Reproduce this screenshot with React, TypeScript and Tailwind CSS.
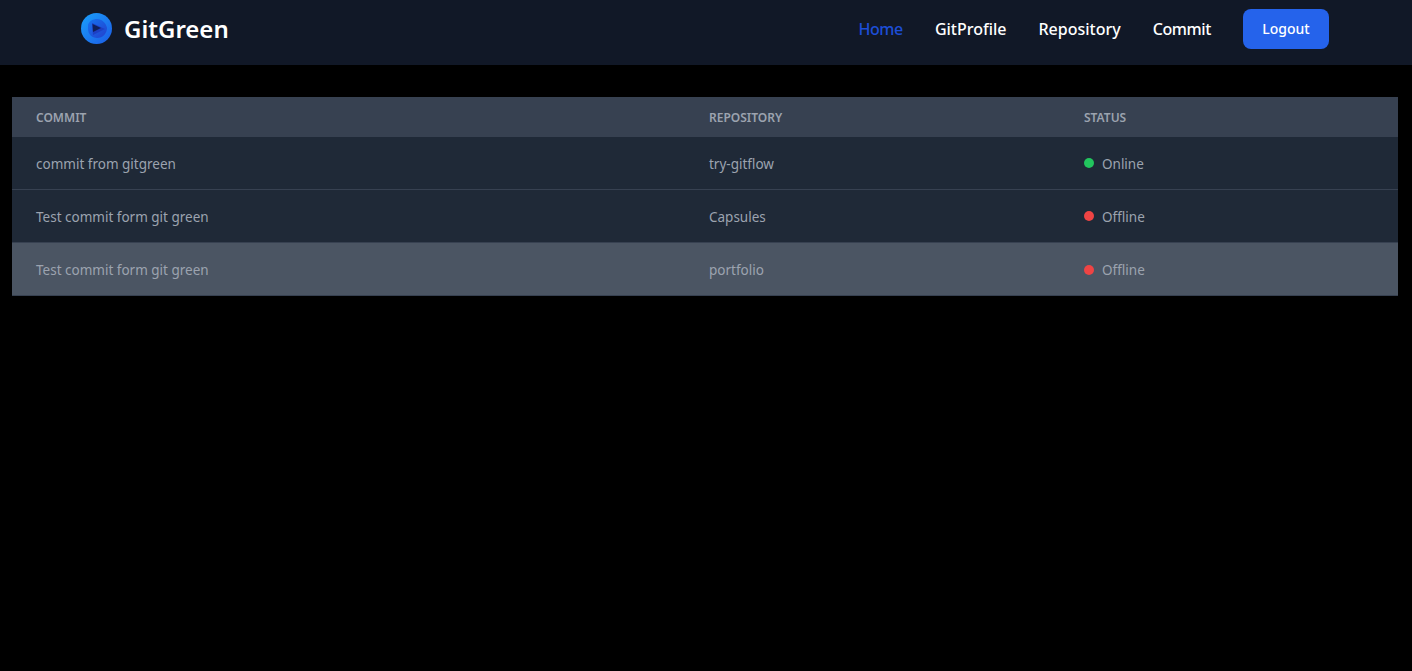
import React from 'react';

const rows = [
    { commit: 'commit from gitgreen', repo: 'try-gitflow', status: 'Online' },
    { commit: 'Test commit form git green', repo: 'Capsules', status: 'Offline' },
    { commit: 'Test commit form git green', repo: 'portfolio', status: 'Offline' },
];

const Logo = () => (
    <svg width="31" height="31" viewBox="0 0 31 31" className="mr-3 -mt-px">
        <defs>
            <linearGradient id="logoRing" x1="0" y1="0" x2="1" y2="1">
                <stop offset="0" stopColor="#1aa0fb" />
                <stop offset="1" stopColor="#1c5be6" />
            </linearGradient>
            <linearGradient id="logoBand" x1="0" y1="0" x2="1" y2="1">
                <stop offset="0" stopColor="#1573f0" />
                <stop offset="1" stopColor="#2340cc" />
            </linearGradient>
        </defs>
        <circle cx="15.5" cy="15.5" r="15.5" fill="url(#logoRing)" />
        <path d="M7 12 C8 8 12 6 16 6 C21 6 25 10 26 15 C26 20 22 25 16 25 C11 25 7 21 7 16 Z" fill="url(#logoBand)" />
        <path d="M11 10 L24 16 L12 22 Z" fill="#1d3fc4" />
        <path d="M11.5 11 L20 15 L12 19 Z" fill="#0f1f5c" />
    </svg>
);

const NavLink = ({ label, className }: { label: string; className: string }) => (
    <a href="#" className={className}>
        {label}
    </a>
);

export default function App() {
    return (
        <div className="min-h-[671px] bg-black font-['Noto_Sans',sans-serif]">
            <nav className="h-[65px] bg-[#111827] flex items-center justify-between pl-[81px] pr-[83px] pb-[7px]">
                <div className="flex items-center">
                    <Logo />
                    <span className="text-2xl font-semibold text-white">GitGreen</span>
                </div>
                <div className="flex items-center gap-8">
                    <NavLink label="Home" className="font-medium tracking-[-0.4px] text-[#1d4ed8]" />
                    <NavLink label="GitProfile" className="font-medium text-white" />
                    <NavLink label="Repository" className="font-medium text-white" />
                    <NavLink label="Commit" className="font-medium tracking-[-0.4px] text-white" />
                    <button className="h-10 w-[86px] rounded-lg bg-[#2563eb] text-sm font-medium text-white">Logout</button>
                </div>
            </nav>

            <div className="mt-8 ml-3 mr-3.5">
                <table className="w-full table-fixed text-left text-[13.5px] text-[#9ca3af]">
                    <thead className="bg-[#374151] text-xs uppercase">
                        <tr className="h-10">
                            <th className="w-[673px] px-6 pt-px font-semibold">Commit</th>
                            <th className="w-[375px] px-6 pt-px font-semibold">Repository</th>
                            <th className="px-6 pt-px font-semibold">Status</th>
                        </tr>
                    </thead>
                    <tbody>
                        {rows.map((row, index) => (
                            <tr
                                key={index}
                                className={
                                    index === 2
                                        ? 'h-[53px] bg-[#4b5563] border-b border-[#374151] [&>td]:pt-1'
                                        : 'h-[52.5px] bg-[#1f2937] border-b border-[#374151]'
                                }
                            >
                                <td className="px-6 pt-0.5">{row.commit}</td>
                                <td className="px-6 pt-0.5">{row.repo}</td>
                                <td className="px-6 pt-0.5">
                                    <div className="flex items-center">
                                        <div
                                            className={
                                                row.status === 'Online'
                                                    ? 'h-2.5 w-2.5 rounded-full bg-[#22c55e] mr-2 -mt-0.5'
                                                    : 'h-2.5 w-2.5 rounded-full bg-[#ef4444] mr-2 -mt-0.5'
                                            }
                                        />
                                        {row.status}
                                    </div>
                                </td>
                            </tr>
                        ))}
                    </tbody>
                </table>
            </div>
        </div>
    );
}
